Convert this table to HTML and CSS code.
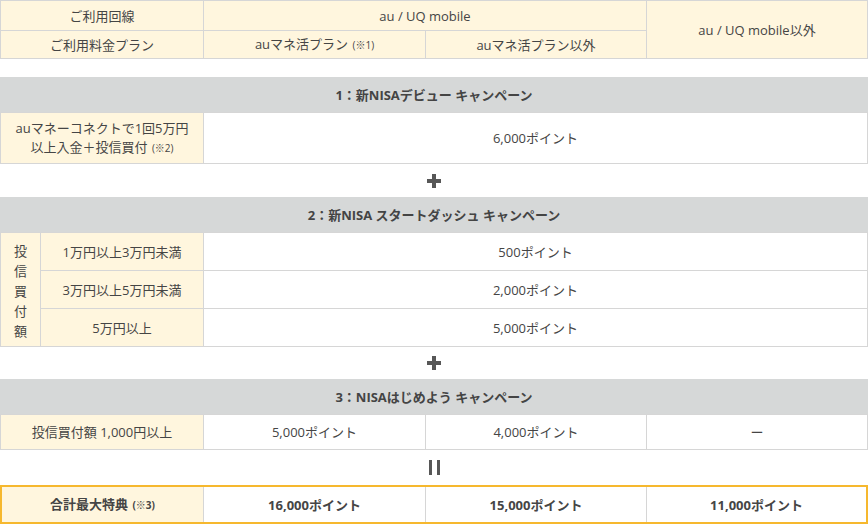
FILE: index.html
```html
<!DOCTYPE html>
<html lang="ja">
<head>
<meta charset="utf-8">
<link rel="stylesheet" href="styles.css">
</head>
<body>
<div class="page">
  <div class="grid top">
    <div class="cell cream"><span>ご利用回線</span></div>
    <div class="cell cream span2"><span>au / UQ mobile</span></div>
    <div class="cell cream rs2"><span>au / UQ mobile以外</span></div>
    <div class="cell cream"><span>ご利用料金プラン</span></div>
    <div class="cell cream"><span>auマネ活プラン <small>(※1)</small></span></div>
    <div class="cell cream"><span>auマネ活プラン以外</span></div>
  </div>

  <div class="spacer"></div>

  <div class="band">1：新NISAデビュー キャンペーン</div>
  <div class="grid two">
    <div class="cell cream"><span class="lines">auマネーコネクトで1回5万円<br>以上入金＋投信買付 <small>(※2)</small></span></div>
    <div class="cell white"><span>6,000ポイント</span></div>
  </div>

  <div class="op"><span class="plus"></span></div>

  <div class="band">2：新NISA スタートダッシュ キャンペーン</div>
  <div class="grid three">
    <div class="cell cream vcell"><span class="vert">投信買付額</span></div>
    <div class="cell cream"><span>1万円以上3万円未満</span></div>
    <div class="cell white"><span>500ポイント</span></div>
    <div class="cell cream"><span>3万円以上5万円未満</span></div>
    <div class="cell white"><span>2,000ポイント</span></div>
    <div class="cell cream"><span>5万円以上</span></div>
    <div class="cell white"><span>5,000ポイント</span></div>
  </div>

  <div class="op op2"><span class="plus"></span></div>

  <div class="band">3：NISAはじめよう キャンペーン</div>
  <div class="grid four">
    <div class="cell cream"><span>投信買付額 1,000円以上</span></div>
    <div class="cell white"><span>5,000ポイント</span></div>
    <div class="cell white"><span>4,000ポイント</span></div>
    <div class="cell white"><span>ー</span></div>
  </div>

  <div class="op op3"><span class="eq"></span></div>

  <div class="grid total">
    <div class="cell cream"><span>合計最大特典 <small>(※3)</small></span></div>
    <div class="cell white"><span>16,000ポイント</span></div>
    <div class="cell white"><span>15,000ポイント</span></div>
    <div class="cell white"><span>11,000ポイント</span></div>
  </div>
</div>
</body>
</html>
```

FILE: styles.css
```css
html, body {
  margin: 0;
  padding: 0;
  background: #ffffff;
}

body {
  font-family: "Open Sans", "Noto Sans CJK JP", sans-serif;
  font-size: 13px;
  color: #454545;
  width: 868px;
}

.page {
  display: flex;
  flex-direction: column;
}

.grid {
  display: grid;
  background: #d6d6d6;
  gap: 1px;
  padding: 1px;
}

.cell {
  display: flex;
  align-items: center;
  justify-content: center;
  text-align: center;
  line-height: 18px;
}

.lines {
  line-height: 19px;
}

.cream { background: #fff6de; }
.white { background: #ffffff; }

small {
  font-size: 10px;
  margin-left: 1px;
}

.top {
  grid-template-columns: 202px 221px 220px 220px;
  grid-template-rows: 29px 27px;
}
.top .span2 { grid-column: 2 / 4; }
.top .rs2 { grid-column: 4; grid-row: 1 / 3; }

.spacer { height: 18px; }

.band {
  height: 35px;
  background: #d6d8d8;
  display: flex;
  align-items: center;
  justify-content: center;
  font-weight: 700;
  color: #444;
}

.two {
  grid-template-columns: 202px 663px;
  grid-template-rows: 50px;
}

.three {
  grid-template-columns: 39px 162px 663px;
  grid-template-rows: 37px 37px 37px;
}
.three .vcell { grid-row: 1 / 4; grid-column: 1; }
.vert {
  display: block;
  width: 1em;
  line-height: 20px;
  margin-top: 3px;
}

.four {
  grid-template-columns: 202px 221px 220px 220px;
  grid-template-rows: 34px;
}

.total {
  background: #d6d6d6;
  border: 2px solid #f6b82e;
  padding: 0;
  grid-template-columns: 201px 221px 220px 219px;
  grid-template-rows: 35px;
  font-weight: 700;
}

.op {
  height: 33px;
  display: flex;
  align-items: center;
  justify-content: center;
}
.op2 { height: 32px; }
.op3 { height: 35px; }

.plus {
  position: relative;
  width: 14px;
  height: 14px;
  margin-left: -1px;
}
.plus::before,
.plus::after {
  content: "";
  position: absolute;
  background: #575757;
}
.plus::before {
  left: 0;
  top: 5px;
  width: 14px;
  height: 4px;
}
.plus::after {
  left: 5px;
  top: 0;
  width: 4px;
  height: 14px;
}

.eq {
  width: 11px;
  height: 15px;
  border-left: 3px solid #575757;
  border-right: 3px solid #575757;
  box-sizing: border-box;
}
```
